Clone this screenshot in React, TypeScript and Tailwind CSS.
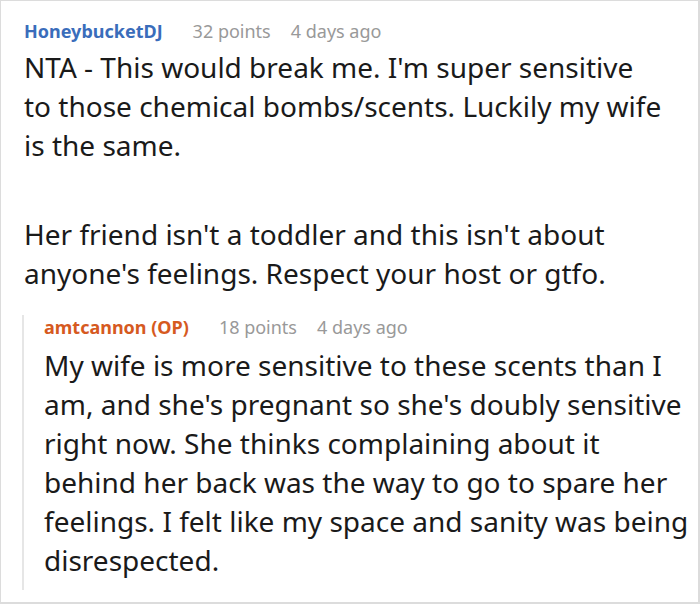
import React from "react";

export default function App() {
  return (
    <div className="w-[700px] h-[604px] bg-white border border-[#dcdcdc] border-r-2 border-b-2 overflow-hidden" style={{ fontFamily: '"Noto Sans", sans-serif' }}>
      <div className="pl-[23px] pr-[5px] pt-[18px]">
        <div className="flex items-center h-[24px] text-[18px]">
          <span className="font-bold text-[#3a6dbb]">HoneybucketDJ</span>
          <span className="ml-[30px] text-[#999999]">32 points</span>
          <span className="ml-[20px] text-[#999999]">4 days ago</span>
        </div>
        <div className="text-[28px] leading-[39px] text-[#1a1a1a] mt-[5px] mr-[30px]">
          <p>NTA - This would break me. I'm super sensitive to those chemical bombs/scents. Luckily my wife is the same.</p>
          <p className="mt-[50px]">Her friend isn't a toddler and this isn't about anyone's feelings. Respect your host or gtfo.</p>
        </div>
        <div className="mt-[22px] border-l-2 border-[#e6e6e6] pl-[20px] ml-[-2px]">
          <div className="flex items-center h-[24px] text-[18px]">
            <span className="font-bold text-[#d65a1f]">amtcannon (OP)</span>
            <span className="ml-[30px] text-[#999999]">18 points</span>
            <span className="ml-[20px] text-[#999999]">4 days ago</span>
          </div>
          <div className="text-[28px] leading-[39px] text-[#1a1a1a] mt-[7px] pb-[10px]">
            <p>My wife is more sensitive to these scents than I am, and she's pregnant so she's doubly sensitive right now. She thinks complaining about it behind her back was the way to go to spare her feelings. I felt like my space and sanity was being disrespected.</p>
          </div>
        </div>
      </div>
    </div>
  );
}
